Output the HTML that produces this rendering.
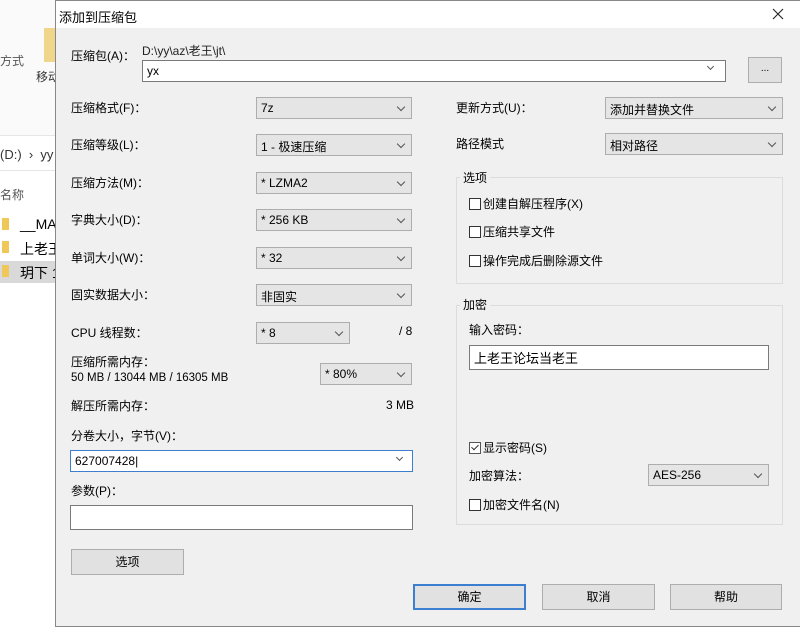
<!DOCTYPE html>
<html><head><meta charset="utf-8"><style>
*{margin:0;padding:0;box-sizing:border-box}
body{width:800px;height:629px;overflow:hidden;background:#fff;position:relative;font-family:"Liberation Sans","Noto Sans CJK SC",sans-serif;font-size:12px;color:#000}
.a{position:absolute;white-space:nowrap}
.dd{position:absolute;height:22px;background:#e5e5e5;border:1px solid #adadad;padding:3px 0 0 4px}
.dd::after{content:"";position:absolute;right:7px;top:6px;width:5px;height:5px;border-right:1px solid #555;border-bottom:1px solid #555;transform:rotate(45deg)}
.in{position:absolute;background:#fff;border:1px solid #7a7a7a;padding:3px 0 0 4px}
.btn{position:absolute;height:26px;background:#e1e1e1;border:1px solid #adadad;text-align:center;line-height:24px}
.grp{position:absolute;border:1px solid #dcdcdc}
.gt{position:absolute;background:#f0f0f0;padding:0 3px}
.cb{display:inline-block;width:12px;height:12px;border:1px solid #333;background:#fff;vertical-align:-2px;margin-right:2px;position:relative}
.l{position:absolute;white-space:nowrap;margin-top:-2px}
</style></head><body>
<div class="a" style="left:0;top:0;width:56px;height:135px;background:#fafafa"></div>
<div class="a" style="left:0;top:52px;color:#555">方式</div>
<div class="a" style="left:44px;top:28px;width:12px;height:34px;background:#f0d68a"></div>
<div class="a" style="left:36px;top:68px;color:#333">移动</div>
<div class="a" style="left:0;top:135px;width:56px;height:1px;background:#e5e5e5"></div>
<div class="a" style="left:0;top:147px;color:#333;font-size:13px">(D:) &nbsp;› &nbsp;yy</div>
<div class="a" style="left:0;top:170px;width:56px;height:1px;background:#e5e5e5"></div>
<div class="a" style="left:0;top:186px;color:#555">名称</div>
<div class="a" style="left:0;top:261px;width:56px;height:22px;background:#d9d9d9"></div>
<div class="a" style="left:2px;top:218px;width:7px;height:12px;background:#f0c85a"></div>
<div class="a" style="left:2px;top:241px;width:7px;height:12px;background:#f0c85a"></div>
<div class="a" style="left:2px;top:265px;width:7px;height:12px;background:#f0c85a"></div>
<div class="a" style="left:20px;top:216px;font-size:14px">__MA</div>
<div class="a" style="left:20px;top:239px;font-size:14px">上老王</div>
<div class="a" style="left:20px;top:263px;font-size:14px">玥下 1</div>

<div class="a" style="left:55px;top:0;width:746px;height:627px;background:#f0f0f0;border:1px solid #888"></div>
<div class="a" style="left:56px;top:1px;width:744px;height:27px;background:#fff"></div>
<div class="a" style="left:59px;top:7px;font-size:13px">添加到压缩包</div>
<svg class="a" style="left:772px;top:8px" width="12" height="12"><path d="M1 1L11 11M11 1L1 11" stroke="#222" stroke-width="1.1"/></svg>

<div class="l" style="left:71px;top:49px">压缩包(A)：</div>
<div class="a" style="left:142px;top:42px;color:#222">D:\yy\az\老王\jt\</div>
<div class="in" style="left:142px;top:60px;width:584px;height:22px">yx</div>
<div class="a" style="left:708px;top:64px;width:5px;height:5px;border-right:1px solid #555;border-bottom:1px solid #555;transform:rotate(45deg)"></div>
<div class="btn" style="left:748px;top:57px;width:34px;line-height:22px;font-size:10px">...</div>

<div class="l" style="left:71px;top:101px">压缩格式(F)：</div><div class="dd" style="left:256px;top:97px;width:156px">7z</div>
<div class="l" style="left:71px;top:138px">压缩等级(L)：</div><div class="dd" style="left:256px;top:134px;width:156px">1 - 极速压缩</div>
<div class="l" style="left:71px;top:176px">压缩方法(M)：</div><div class="dd" style="left:256px;top:172px;width:156px">* LZMA2</div>
<div class="l" style="left:71px;top:213px">字典大小(D)：</div><div class="dd" style="left:256px;top:209px;width:156px">* 256 KB</div>
<div class="l" style="left:71px;top:251px">单词大小(W)：</div><div class="dd" style="left:256px;top:247px;width:156px">* 32</div>
<div class="l" style="left:71px;top:288px">固实数据大小：</div><div class="dd" style="left:256px;top:284px;width:156px">非固实</div>
<div class="l" style="left:71px;top:326px">CPU 线程数：</div><div class="dd" style="left:256px;top:322px;width:94px">* 8</div>
<div class="l" style="left:399px;top:326px">/ 8</div>
<div class="l" style="left:71px;top:355px">压缩所需内存：</div>
<div class="l" style="left:71px;top:374px;font-size:11.5px">50 MB / 13044 MB / 16305 MB</div>
<div class="dd" style="left:320px;top:363px;width:92px">* 80%</div>
<div class="l" style="left:71px;top:399px">解压所需内存：</div>
<div class="l" style="left:386px;top:400px">3 MB</div>
<div class="l" style="left:71px;top:429px">分卷大小，字节(V)：</div>
<div class="in" style="left:70px;top:450px;width:343px;height:22px;border-color:#3c7fd0">627007428|</div>
<div class="a" style="left:397px;top:455px;width:5px;height:5px;border-right:1px solid #555;border-bottom:1px solid #555;transform:rotate(45deg)"></div>
<div class="l" style="left:71px;top:484px">参数(P)：</div>
<div class="in" style="left:70px;top:505px;width:343px;height:25px"></div>
<div class="btn" style="left:71px;top:549px;width:113px">选项</div>

<div class="l" style="left:456px;top:101px">更新方式(U)：</div><div class="dd" style="left:605px;top:97px;width:178px">添加并替换文件</div>
<div class="l" style="left:456px;top:137px">路径模式</div><div class="dd" style="left:605px;top:133px;width:178px">相对路径</div>

<div class="grp" style="left:456px;top:177px;width:327px;height:107px"></div>
<div class="gt" style="left:460px;top:169px">选项</div>
<div class="l" style="left:469px;top:197px"><span class="cb"></span>创建自解压程序(X)</div>
<div class="l" style="left:469px;top:225px"><span class="cb"></span>压缩共享文件</div>
<div class="l" style="left:469px;top:254px"><span class="cb"></span>操作完成后删除源文件</div>

<div class="grp" style="left:456px;top:305px;width:327px;height:220px"></div>
<div class="gt" style="left:460px;top:296px">加密</div>
<div class="l" style="left:469px;top:323px">输入密码：</div>
<div class="in" style="left:469px;top:345px;width:300px;height:25px;font-size:13px;padding-top:2px">上老王论坛当老王</div>
<div class="l" style="left:469px;top:441px"><span class="cb" style="border-color:#555"><span style="position:absolute;left:3px;top:0px;width:4px;height:7px;border-right:1px solid #333;border-bottom:1px solid #333;transform:rotate(45deg)"></span></span>显示密码(S)</div>
<div class="l" style="left:469px;top:469px">加密算法：</div>
<div class="dd" style="left:648px;top:464px;width:121px">AES-256</div>
<div class="l" style="left:469px;top:498px"><span class="cb"></span>加密文件名(N)</div>

<div class="btn" style="left:413px;top:584px;width:113px;border:2px solid #3c7fd0;line-height:22px">确定</div>
<div class="btn" style="left:542px;top:584px;width:113px">取消</div>
<div class="btn" style="left:670px;top:584px;width:112px">帮助</div>
</body></html>
